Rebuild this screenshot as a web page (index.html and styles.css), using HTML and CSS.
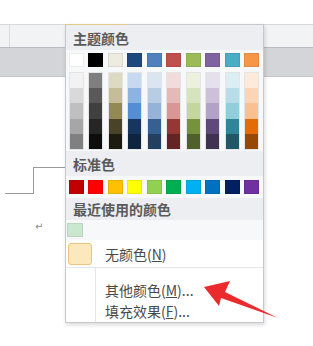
FILE: index.html
```html
<!DOCTYPE html>
<html lang="zh-CN">
<head>
    <meta charset="UTF-8">
    <title>填充颜色</title>
    <link rel="stylesheet" href="styles.css">
</head>
<body>

    <!-- Ribbon strip -->
    <div class="ribbon">
        <div class="tabs"><span class="tab-gap"></span></div>
        <div class="bar"></div>
    </div>

    <!-- Document page -->
    <div class="doc">
        <div class="line-low"></div>
        <div class="line-high"></div>
        <span class="para">↵</span>
    </div>

    <!-- Colour dropdown -->
    <div class="menu">
        <div class="menu-label">主题颜色</div>
        <div class="theme">
            <div class="swatch-row" id="base-row"></div>
            <div class="swatch-row shades" id="shade-row"></div>
        </div>

        <div class="menu-label">标准色</div>
        <div class="swatch-row std" id="std-row"></div>

        <div class="menu-label short">最近使用的颜色</div>
        <div class="recent">
            <span class="swatch" style="background:#c9e8cf"></span>
        </div>

        <div class="menu-item first">
            <span class="icon"><span class="no-color"></span></span>
            <span class="text">无颜色(<u>N</u>)</span>
        </div>
        <div class="menu-list">
            <div class="menu-item">
                <span class="icon"></span>
                <span class="text">其他颜色(<u>M</u>)...</span>
            </div>
            <div class="menu-item">
                <span class="icon"></span>
                <span class="text">填充效果(<u>F</u>)...</span>
            </div>
        </div>
    </div>

    <!-- Red pointer -->
    <svg class="pointer" width="313" height="346" viewBox="0 0 313 346">
        <polygon points="204,287 230,281 225,292 278,318 221,298 219,306" fill="#ea2a2c"/>
    </svg>

    <script>
        const base = ['#ffffff', '#000000', '#eeece1', '#1f497d', '#4f81bd', '#c0504d', '#9bbb59', '#8064a2', '#4bacc6', '#f79646'];
        const shades = [
            ['#f2f2f2', '#d9d9d9', '#bfbfbf', '#a6a6a6', '#808080'],
            ['#7f7f7f', '#595959', '#404040', '#262626', '#0d0d0d'],
            ['#ddd9c3', '#c4bd97', '#938953', '#494429', '#1d1b10'],
            ['#c6d9f0', '#8db3e2', '#548dd4', '#17365d', '#0f243e'],
            ['#dbe5f1', '#b8cce4', '#95b3d7', '#366092', '#244061'],
            ['#f2dcdb', '#e5b9b7', '#d99694', '#953734', '#632423'],
            ['#ebf1dd', '#d7e3bc', '#c3d69b', '#76923c', '#4f6128'],
            ['#e5e0ec', '#ccc1d9', '#b2a2c7', '#5f497a', '#3f3151'],
            ['#dbeef3', '#b7dde8', '#92cddc', '#31859b', '#205867'],
            ['#fdeada', '#fbd5b5', '#fac08f', '#e36c09', '#974806']
        ];
        const standard = ['#c00000', '#ff0000', '#ffc000', '#ffff00', '#92d050', '#00b050', '#00b0f0', '#0070c0', '#002060', '#7030a0'];

        function addSwatch(parent, color) {
            const s = document.createElement('span');
            s.className = 'swatch';
            s.style.background = color;
            parent.appendChild(s);
        }

        base.forEach(c => addSwatch(document.getElementById('base-row'), c));
        standard.forEach(c => addSwatch(document.getElementById('std-row'), c));

        const shadeRow = document.getElementById('shade-row');
        shades.forEach(col => {
            const column = document.createElement('div');
            column.className = 'shade-col';
            col.forEach(c => {
                const cell = document.createElement('span');
                cell.style.background = c;
                column.appendChild(cell);
            });
            shadeRow.appendChild(column);
        });
    </script>

</body>
</html>
```

FILE: styles.css
```css
/* Reset */
* {
    margin: 0;
    padding: 0;
    box-sizing: border-box;
}

body {
    width: 313px;
    height: 346px;
    background: #ffffff;
    position: relative;
    overflow: hidden;
    font-family: "Noto Sans CJK SC", "Noto Sans", sans-serif;
}

/* Ribbon */
.ribbon {
    padding-top: 24px;
}

.tabs {
    height: 24px;
    background: #f2f3f4;
    border-top: 1px solid #d8d9db;
    border-bottom: 1px solid #b9bcc0;
}

.tab-gap {
    display: block;
    width: 10px;
    height: 100%;
    border-right: 1px solid #dcdde0;
}

.bar {
    height: 29px;
    background: #d3d5d8;
    border-bottom: 1px solid #c4c6ca;
}

/* Document */
.doc {
    position: relative;
    height: 269px;
}

.line-low {
    position: absolute;
    left: 5px;
    top: 90px;
    width: 29px;
    height: 27px;
    border-bottom: 1px solid #9a9a9a;
    border-right: 1px solid #9a9a9a;
}

.line-high {
    position: absolute;
    left: 33px;
    top: 90px;
    width: 40px;
    border-top: 1px solid #9a9a9a;
}

.para {
    position: absolute;
    left: 35px;
    top: 144px;
    font-size: 10px;
    color: #8a8a8a;
    font-family: "DejaVu Sans", sans-serif;
}

/* Dropdown */
.menu {
    position: absolute;
    left: 65px;
    top: 24px;
    width: 199px;
    height: 299px;
    background: #f7f8f9;
    border: 1px solid #c6c8cb;
    box-shadow: 1px 2px 4px rgba(0, 0, 0, 0.15);
    z-index: 10;
}

.menu::before {
    content: "";
    position: absolute;
    left: -1px;
    top: -1px;
    width: 62px;
    height: 1px;
    background: #e3c98a;
}

.menu-label {
    height: 25px;
    padding: 2px 0 0 7px;
    background: #eceef1;
    color: #5a5a5a;
    font-size: 14px;
    font-weight: bold;
    line-height: 23px;
}

.menu-label.short {
    height: 22px;
    padding-top: 1px;
    line-height: 21px;
}

.theme {
    height: 101px;
    padding: 3px 0 0 2.5px;
}

.swatch-row {
    display: flex;
    gap: 4.5px;
}

.swatch {
    display: block;
    width: 15px;
    height: 14px;
    border: 1px solid rgba(0, 0, 0, 0.08);
}

.shades {
    margin-top: 5px;
}

.shade-col {
    display: flex;
    flex-direction: column;
    width: 15px;
    height: 78px;
    border: 1px solid rgba(0, 0, 0, 0.08);
}

.shade-col span {
    display: block;
    flex: 1;
}

.std {
    height: 22px;
    padding: 4px 0 0 2.5px;
}

.recent {
    height: 20px;
    padding: 3px 0 0 1px;
}

.recent .swatch {
    width: 16px;
    height: 14px;
}

/* Items */
.menu-item {
    display: flex;
    align-items: center;
    height: 21px;
    font-size: 14px;
    color: #4a4a4a;
}

.menu-item.first {
    height: 28px;
    background: #ffffff;
    border-bottom: 1px solid #e4e5e7;
}

.menu-item .icon {
    width: 30px;
    height: 100%;
    display: flex;
    align-items: center;
    padding-left: 2px;
}

.menu-item .text {
    padding-left: 9px;
}

.no-color {
    display: block;
    width: 24px;
    height: 22px;
    background: #fce8bd;
    border: 1px solid #f0c27b;
    border-radius: 3px;
}

.menu-list {
    height: 54px;
    padding-top: 11px;
    background: linear-gradient(to right, #ffffff 29px, #e4e5e7 29px, #e4e5e7 30px, #ffffff 30px);
}

/* Pointer */
.pointer {
    position: absolute;
    left: 0;
    top: 0;
    z-index: 20;
}
```
